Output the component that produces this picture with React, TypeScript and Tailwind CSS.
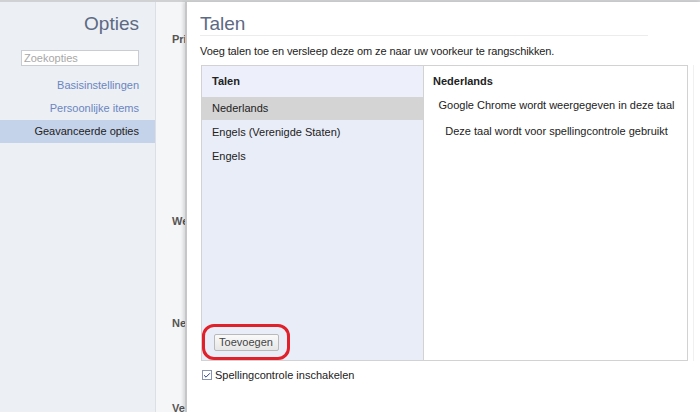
import { Check } from 'lucide-react';

const font = { fontFamily: '"Liberation Sans", Arial, sans-serif' };

function Sidebar() {
  return (
    <div className="w-[156px] shrink-0 bg-[#eceff3] border-r border-[#dcdfe4] flex flex-col">
      <h1 className="text-[19px] leading-none text-[#5c6a84] text-right pr-[16px] pt-[12px]">Opties</h1>
      <div className="flex justify-end pr-[16px] mt-[17px]">
        <div className="w-[118px] h-[16px] bg-white border border-[#c9ccd2] text-[11px] leading-[14px] text-[#a8a8a8] pl-[2px]">
          Zoekopties
        </div>
      </div>
      <div className="mt-[8px] flex flex-col text-[11px] text-right">
        <div className="h-[23px] leading-[23px] pr-[16px] text-[#6a86c2]">Basisinstellingen</div>
        <div className="h-[23px] leading-[23px] pr-[16px] text-[#6a86c2]">Persoonlijke items</div>
        <div className="h-[23px] leading-[23px] pr-[16px] text-[#222] bg-[#c5d3ea]">Geavanceerde opties</div>
      </div>
    </div>
  );
}

function BackgroundStrip() {
  return (
    <div className="w-[29px] shrink-0 bg-[#f5f6f8] overflow-hidden text-[11px] font-bold text-[#555] whitespace-nowrap">
      <div className="pl-[16px] pt-[29px] h-[211px]">Privacy</div>
      <div className="pl-[16px] h-[102px]">Webinhoud</div>
      <div className="pl-[16px] h-[85px]">Netwerk</div>
      <div className="pl-[16px]">Vertalen</div>
    </div>
  );
}

function LanguagePanel() {
  const talen = ['Nederlands', 'Engels (Verenigde Staten)', 'Engels'];
  return (
    <div className="mx-[14px] w-[487px] h-[296px] border border-[#d2d2d2] flex text-[11px] text-[#222]">
      <div className="w-[221px] bg-[#e9edf8] flex flex-col">
        <div className="h-[31px] leading-[31px] pl-[10px] font-bold bg-[#edf0fa]">Talen</div>
        {talen.map((t, i) => (
          <div
            key={t}
            className={
              'h-[23px] leading-[23px] pl-[10px] mb-[1px] ' + (i === 0 ? 'bg-[#d4d4d4]' : '')
            }
          >
            {t}
          </div>
        ))}
        <div className="flex-1" />
        <div className="w-[88px] h-[36px] border-[3px] border-[#e0202a] rounded-[12px] flex items-center justify-center">
          <button className="w-[65px] h-[17px] border border-[#b9b9b9] rounded-[2px] bg-gradient-to-b from-[#fafafa] to-[#e6e6e6] text-[11px] leading-[15px] text-[#444]">
            Toevoegen
          </button>
        </div>
      </div>
      <div className="flex-1 bg-white border-l border-[#d2d2d2] flex flex-col">
        <div className="h-[31px] leading-[31px] pl-[9px] font-bold">Nederlands</div>
        <div className="text-center h-[17px] leading-[17px] pl-[2px]">Google Chrome wordt weergegeven in deze taal</div>
        <div className="text-center h-[17px] leading-[17px] mt-[9px] pl-[2px]">Deze taal wordt voor spellingcontrole gebruikt</div>
      </div>
    </div>
  );
}

function Dialog() {
  return (
    <div className="flex-1 bg-white border-l-2 border-[#c4c6ca] shadow-[-2px_0_3px_rgba(0,0,0,0.12)] flex flex-col">
      <h2 className="text-[19px] leading-none text-[#5c6a84] pl-[13px] pt-[12px]">Talen</h2>
      <div className="ml-[13px] w-[448px] h-px bg-[#ececec] mt-[2px]" />
      <p className="text-[11px] text-[#222] pl-[13px] mt-[9px] leading-[13px] tracking-[-0.1px]">
        Voeg talen toe en versleep deze om ze naar uw voorkeur te rangschikken.
      </p>
      <div className="mt-[7px] flex">
        <LanguagePanel />
        <div className="w-px h-[296px] bg-[#f0f0f0] ml-[-9px]" />
      </div>
      <label className="flex items-center gap-[3px] pl-[15px] mt-[6px] text-[11px] text-[#222]">
        <span className="w-[10px] h-[10px] border border-[#8a96b0] bg-white flex items-center justify-center">
          <Check size={9} strokeWidth={3} className="text-[#2a3f8a]" />
        </span>
        Spellingcontrole inschakelen
      </label>
    </div>
  );
}

export default function App() {
  return (
    <div className="w-[700px] h-[412px] overflow-hidden flex flex-col bg-white" style={font}>
      <div className="h-[2px] bg-[#d0d1d3] shrink-0" />
      <div className="flex flex-1 min-h-0">
        <Sidebar />
        <BackgroundStrip />
        <Dialog />
      </div>
    </div>
  );
}
